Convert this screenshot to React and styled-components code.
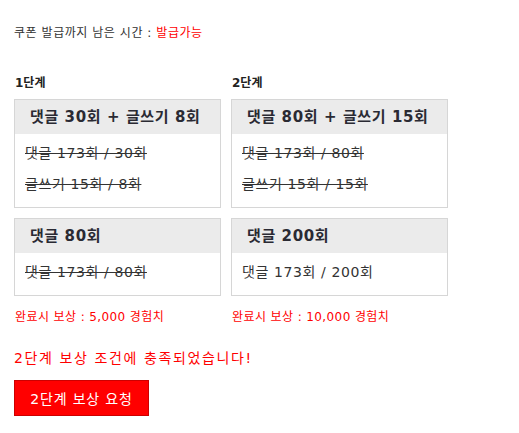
import styled, { createGlobalStyle } from "styled-components";

const GlobalStyle = createGlobalStyle`
  body {
    margin: 0;
    background: #fff;
    font-family: "DejaVu Sans", "Noto Sans CJK KR", sans-serif;
    color: #222;
  }
`;

const stages = [
  {
    label: "1단계",
    width: 207,
    reward: "5,000",
    missions: [
      {
        title: "댓글 30회 + 글쓰기 8회",
        lines: [
          { text: "댓글 173회 / 30회", done: true },
          { text: "글쓰기 15회 / 8회", done: true },
        ],
      },
      {
        title: "댓글 80회",
        lines: [{ text: "댓글 173회 / 80회", done: true }],
      },
    ],
  },
  {
    label: "2단계",
    width: 217,
    reward: "10,000",
    missions: [
      {
        title: "댓글 80회 + 글쓰기 15회",
        lines: [
          { text: "댓글 173회 / 80회", done: true },
          { text: "글쓰기 15회 / 15회", done: true },
        ],
      },
      {
        title: "댓글 200회",
        lines: [{ text: "댓글 173회 / 200회", done: false }],
      },
    ],
  },
];

const App = () => {
  return (
    <Page>
      <GlobalStyle />
      <TopLine>
        쿠폰 발급까지 남은 시간 : <Red>발급가능</Red>
      </TopLine>
      <Stages>
        {stages.map((stage) => (
          <Column key={stage.label} $width={stage.width}>
            <StageLabel>{stage.label}</StageLabel>
            {stage.missions.map((m) => (
              <Box key={m.title}>
                <BoxHeader>{m.title}</BoxHeader>
                <BoxBody>
                  {m.lines.map((l) => (
                    <Line key={l.text} $done={l.done}>
                      {l.text}
                    </Line>
                  ))}
                </BoxBody>
              </Box>
            ))}
            <Reward>완료시 보상 : {stage.reward} 경험치</Reward>
          </Column>
        ))}
      </Stages>
      <Message>2단계 보상 조건에 충족되었습니다!</Message>
      <RequestButton>2단계 보상 요청</RequestButton>
    </Page>
  );
};

export default App;

const Page = styled.div`
  padding: 24px 14px;
`;

const TopLine = styled.div`
  font-size: 12px;
  line-height: 18px;
  letter-spacing: 0.55px;
  color: #333;
`;

const Red = styled.span`
  color: #f00;
`;

const Stages = styled.div`
  display: flex;
  gap: 10px;
  margin-top: 32px;
`;

const Column = styled.div`
  width: ${(p) => p.$width}px;
  display: flex;
  flex-direction: column;
  gap: 10px;
`;

const StageLabel = styled.div`
  font-size: 12px;
  font-weight: bold;
  line-height: 18px;
  padding-left: 1px;
  margin-bottom: -3px;
  color: #222;
`;

const Box = styled.div`
  border: 1px solid #d6d6d6;
`;

const BoxHeader = styled.div`
  background: #ebebeb;
  height: 34px;
  line-height: 34px;
  padding: 0 15px;
  font-size: 15px;
  font-weight: bold;
  letter-spacing: 0.6px;
  color: #2a2a33;
  white-space: nowrap;
`;

const BoxBody = styled.div`
  padding: 9px 10px 13px;
  display: flex;
  flex-direction: column;
  gap: 11px;
`;

const Line = styled.div`
  font-size: 14px;
  line-height: 20px;
  letter-spacing: 0.6px;
  color: #333;
  text-decoration: ${(p) => (p.$done ? "line-through" : "none")};
`;

const Reward = styled.div`
  font-size: 12px;
  line-height: 18px;
  letter-spacing: 0.4px;
  color: #f00;
  padding-left: 1px;
  margin-top: 2px;
`;

const Message = styled.div`
  margin-top: 22px;
  font-size: 14px;
  line-height: 20px;
  letter-spacing: 1.6px;
  color: #f00;
`;

const RequestButton = styled.button`
  display: block;
  margin-top: 12px;
  width: 135px;
  height: 36px;
  background: #f00;
  border: 1px solid #c00;
  color: #fff;
  font-family: inherit;
  font-size: 14px;
  letter-spacing: 0.8px;
  padding: 0;
  cursor: pointer;
`;
